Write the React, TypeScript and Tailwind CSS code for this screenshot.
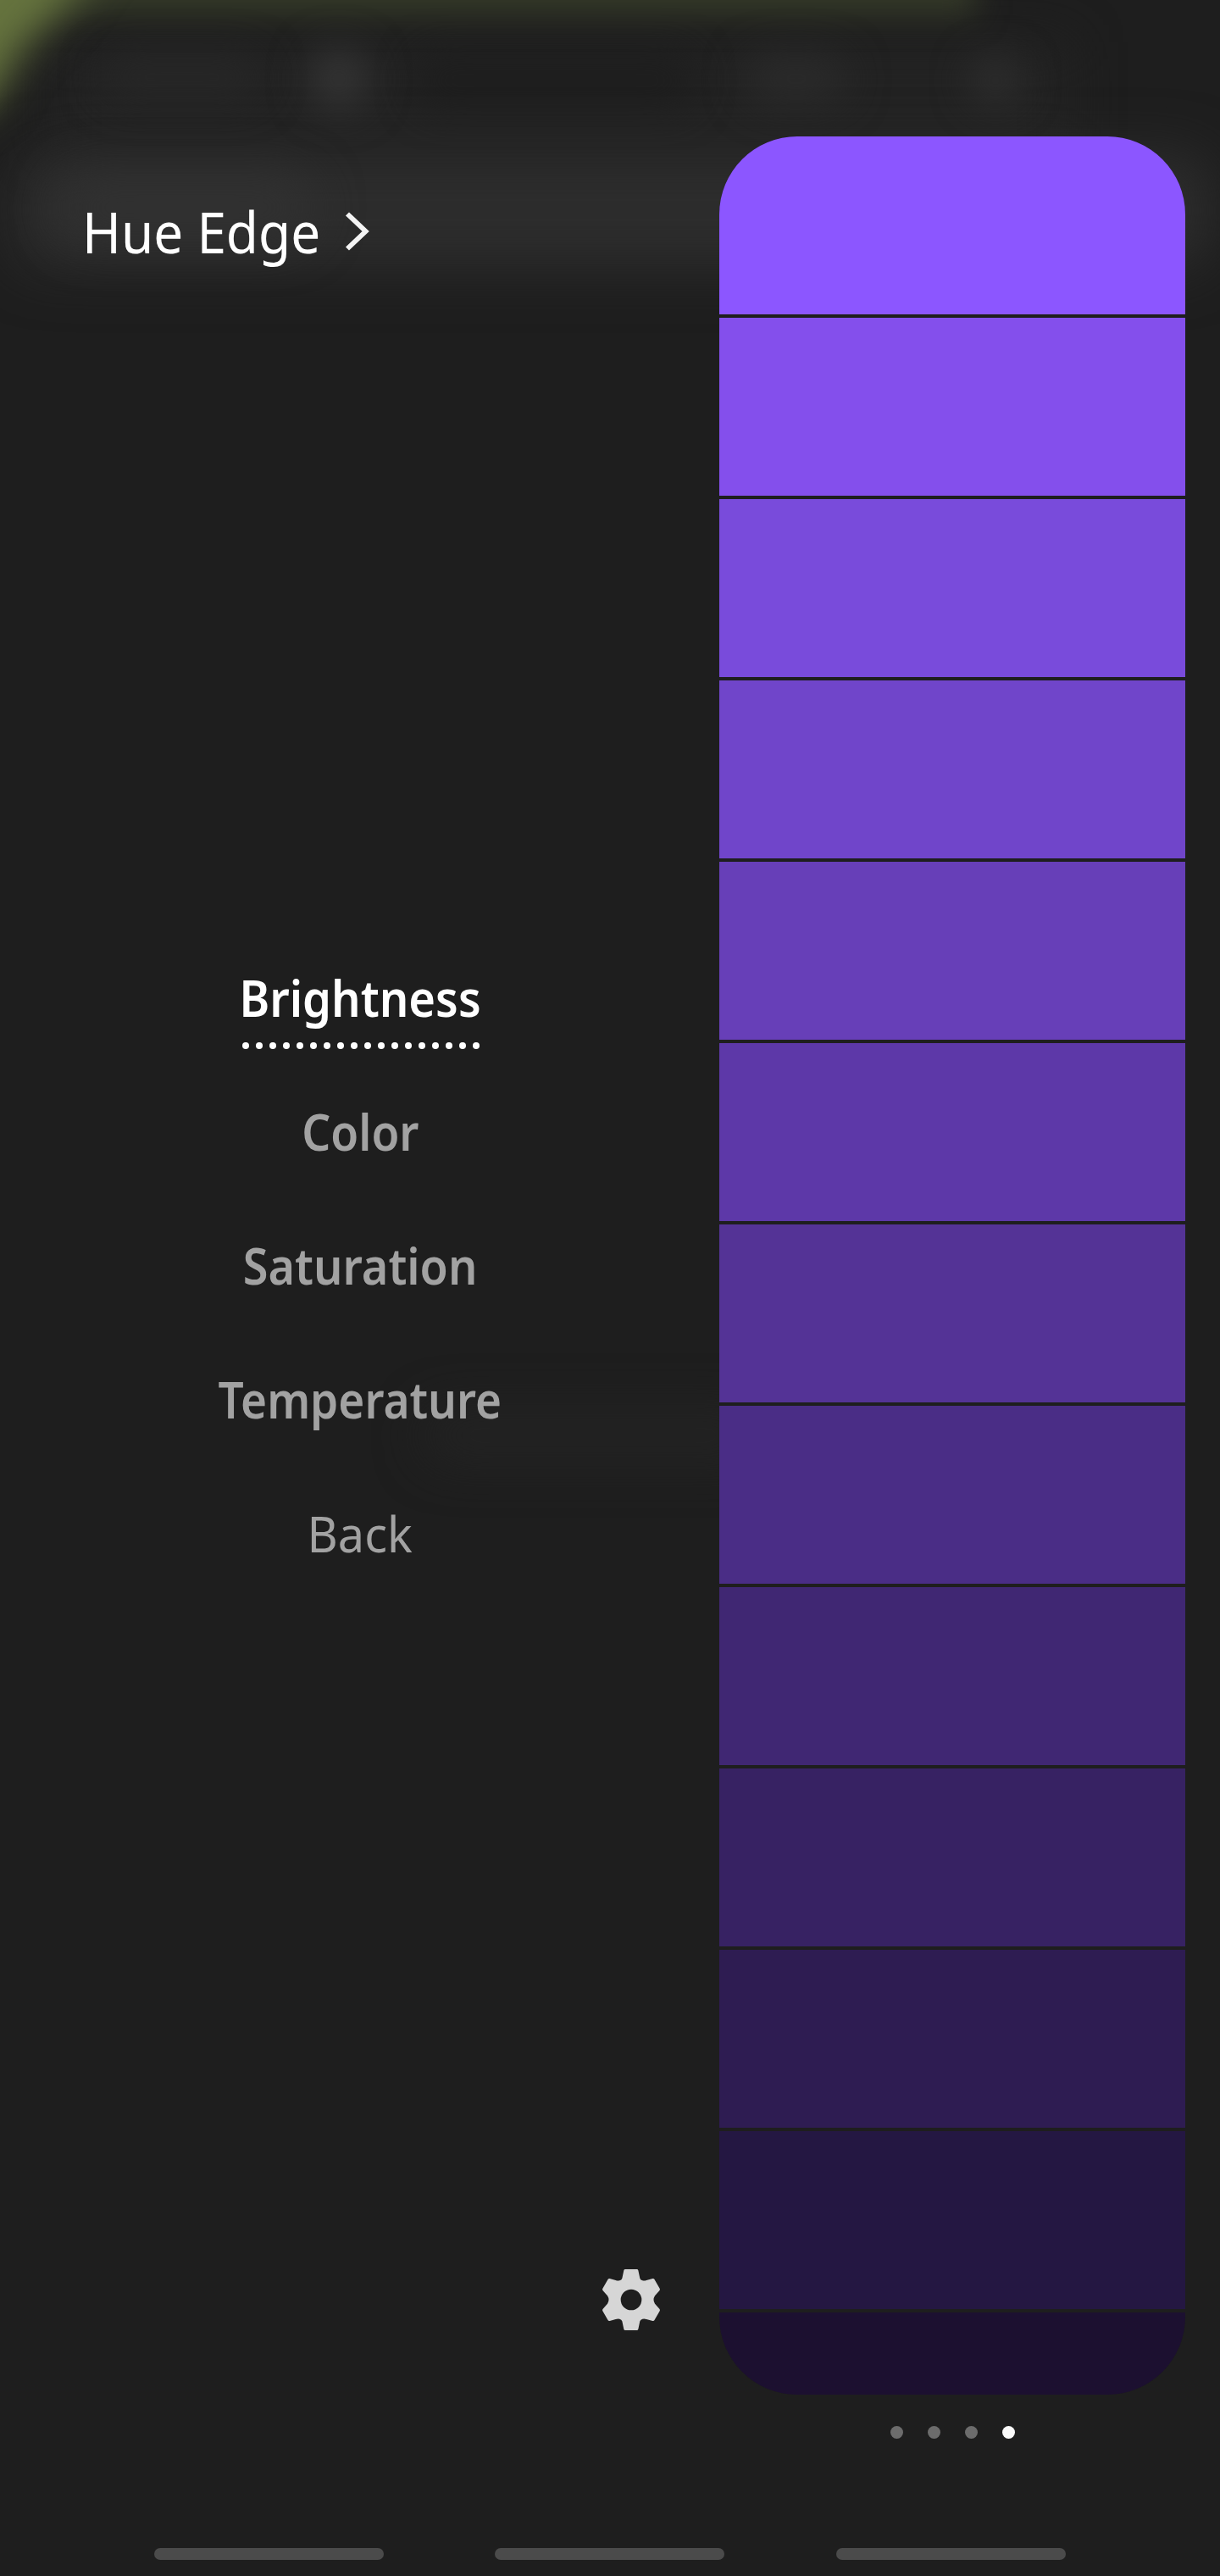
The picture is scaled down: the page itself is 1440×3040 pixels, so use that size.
import React from "react";

const strips = [
  "bg-[#8c56ff]", "bg-[#844fec]", "bg-[#794bdb]", "bg-[#7045ca]", "bg-[#673fb8]", "bg-[#5d38a8]",
  "bg-[#543396]", "bg-[#4a2d86]", "bg-[#402773]", "bg-[#372263]", "bg-[#2e1c52]", "bg-[#241742]",
];

const items = [
  { label: "Brightness", style: "font-semibold text-white scale-x-[0.92]" },
  { label: "Color", style: "font-semibold text-[#a2a2a2] scale-x-[0.905]" },
  { label: "Saturation", style: "font-semibold text-[#a2a2a2] scale-x-[0.915]" },
  { label: "Temperature", style: "font-semibold text-[#a2a2a2] scale-x-[0.9]" },
  { label: "Back", style: "font-normal text-[#a2a2a2] scale-x-[0.946]" },
];

function Backdrop() {
  return (
    <div className="absolute inset-0 overflow-hidden">
      <div className="absolute left-[60px] top-[50px] h-[130px] w-[1200px] bg-[#232323] blur-[30px]" />
      <div className="absolute left-[490px] top-[60px] h-[70px] w-[330px] rounded-[30px] bg-[#1e1e1e] blur-[22px]" />
      <div className="absolute left-[14px] top-[180px] h-[136px] w-[1416px] rounded-[40px] bg-[#2d2d2d] blur-[32px]" />
      <div className="absolute left-[70px] top-[205px] h-[80px] w-[300px] rounded-full bg-[#313131] blur-[28px]" />
      <div className="absolute -left-10 -top-[70px] h-[88px] w-[1192px] bg-[#343928] blur-[18px]" />
      <div className="absolute -left-[100px] -top-[100px] size-[300px] blur-[24px]">
        <div className="size-full bg-[#65733e] [clip-path:polygon(0px_0px,255px_0px,178px_106px,124px_162px,94px_218px,0px_274px)]" />
      </div>
      <div className="absolute left-[120px] top-[66px] h-[50px] w-[190px] rounded-full bg-[#272727] blur-[24px]" />
      <div className="absolute left-[366px] top-[58px] h-[70px] w-[68px] rounded-full bg-[#363636] blur-[24px]" />
      <div className="absolute left-[880px] top-[66px] h-[54px] w-[120px] rounded-full bg-[#2b2b2b] blur-[24px]" />
      <div className="absolute left-[1144px] top-[66px] h-[58px] w-[62px] rounded-full bg-[#2d2d2d] blur-[22px]" />
      <div className="absolute left-[500px] top-[1664px] h-[60px] w-[400px] rounded-full bg-[#232323] blur-[28px]" />
    </div>
  );
}

export default function App() {
  return (
    <div className="relative flex h-[3040px] w-[1440px] flex-col overflow-hidden bg-[#1e1e1e] font-['Noto_Sans',sans-serif]">
      <Backdrop />
      <div className="relative flex h-[2900px]">
        <div className="flex w-[849px] flex-col">
          <header className="flex items-center pl-[97px] pt-[233px] text-white">
            <h1 className="origin-left scale-x-[0.923] whitespace-nowrap text-[67.2px] leading-[80px]">Hue Edge</h1>
            <svg className="h-[52px] w-[40px]" viewBox="0 0 40 52" fill="none" stroke="#f4f4f4" strokeWidth="5.8">
              <path d="M8 5.5 L29.6 26 L8 46.5" />
            </svg>
          </header>
          <nav className="mt-[785px] flex w-[850px] flex-col items-center">
            {items.map((item, i) => (
              <div key={item.label} className="relative flex h-[158px] flex-col items-center">
                <span className={`whitespace-nowrap text-[59px] leading-[158px] ${item.style}`}>{item.label}</span>
                {i === 0 && (
                  <div className="absolute top-[132px] ml-0.5 flex gap-2">
                    {Array.from({ length: 18 }, (_, d) => (
                      <i key={d} className="size-2 rounded-full bg-white" />
                    ))}
                  </div>
                )}
              </div>
            ))}
          </nav>
          <button className="ml-[705px] mt-[786px] size-20" aria-label="Settings">
            <svg viewBox="-120 -120 240 240" className="size-20">
              <path
                fill="#d6d6d6"
                fillRule="evenodd"
                d="M-21-108H20Q24-108 25-104L31-76Q33-70 40-68Q47-66 54-69L76-75Q80-76 82-73L101-40Q103-36 100-32L84-14Q75 0 84 14L100 32Q103 36 101 40L82 73Q80 76 76 75L54 69Q47 66 40 68Q33 70 31 76L25 104Q24 108 20 108H-21Q-25 108-26 104L-32 76Q-34 70-41 68Q-48 66-55 69L-76 75Q-80 76-82 73L-101 40Q-103 36-100 32L-84 14Q-75 0-84-14L-100-32Q-103-36-101-40L-82-73Q-80-76-76-75L-55-69Q-48-66-41-68Q-34-70-32-76L-26-104Q-25-108-21-108ZM0-37A37 37 0 1 0 0 37A37 37 0 1 0 0-37Z"
              />
            </svg>
          </button>
        </div>
        <div className="flex w-[550px] flex-col items-center pt-[161px]">
          <div className="flex h-[2665px] w-full flex-col gap-1 overflow-hidden rounded-[92px] bg-[#1e1e1e]">
            {strips.map((color) => (
              <div key={color} className={`h-[210px] shrink-0 ${color}`} />
            ))}
            <div className="flex-1 bg-[#1c1030]" />
          </div>
          <div className="mt-[36.5px] flex gap-[29px]">
            <i className="size-[15px] rounded-full bg-[#6c6c6c]" />
            <i className="size-[15px] rounded-full bg-[#6c6c6c]" />
            <i className="size-[15px] rounded-full bg-[#6c6c6c]" />
            <i className="size-[15px] rounded-full bg-[#fafafa]" />
          </div>
        </div>
      </div>
      <footer className="relative mt-[107px] flex gap-[131.4px] pl-[182px]">
        <div className="h-[14px] w-[271px] rounded-full bg-[#4b4b4b]" />
        <div className="h-[14px] w-[271px] rounded-full bg-[#4b4b4b]" />
        <div className="h-[14px] w-[271px] rounded-full bg-[#4b4b4b]" />
      </footer>
    </div>
  );
}
